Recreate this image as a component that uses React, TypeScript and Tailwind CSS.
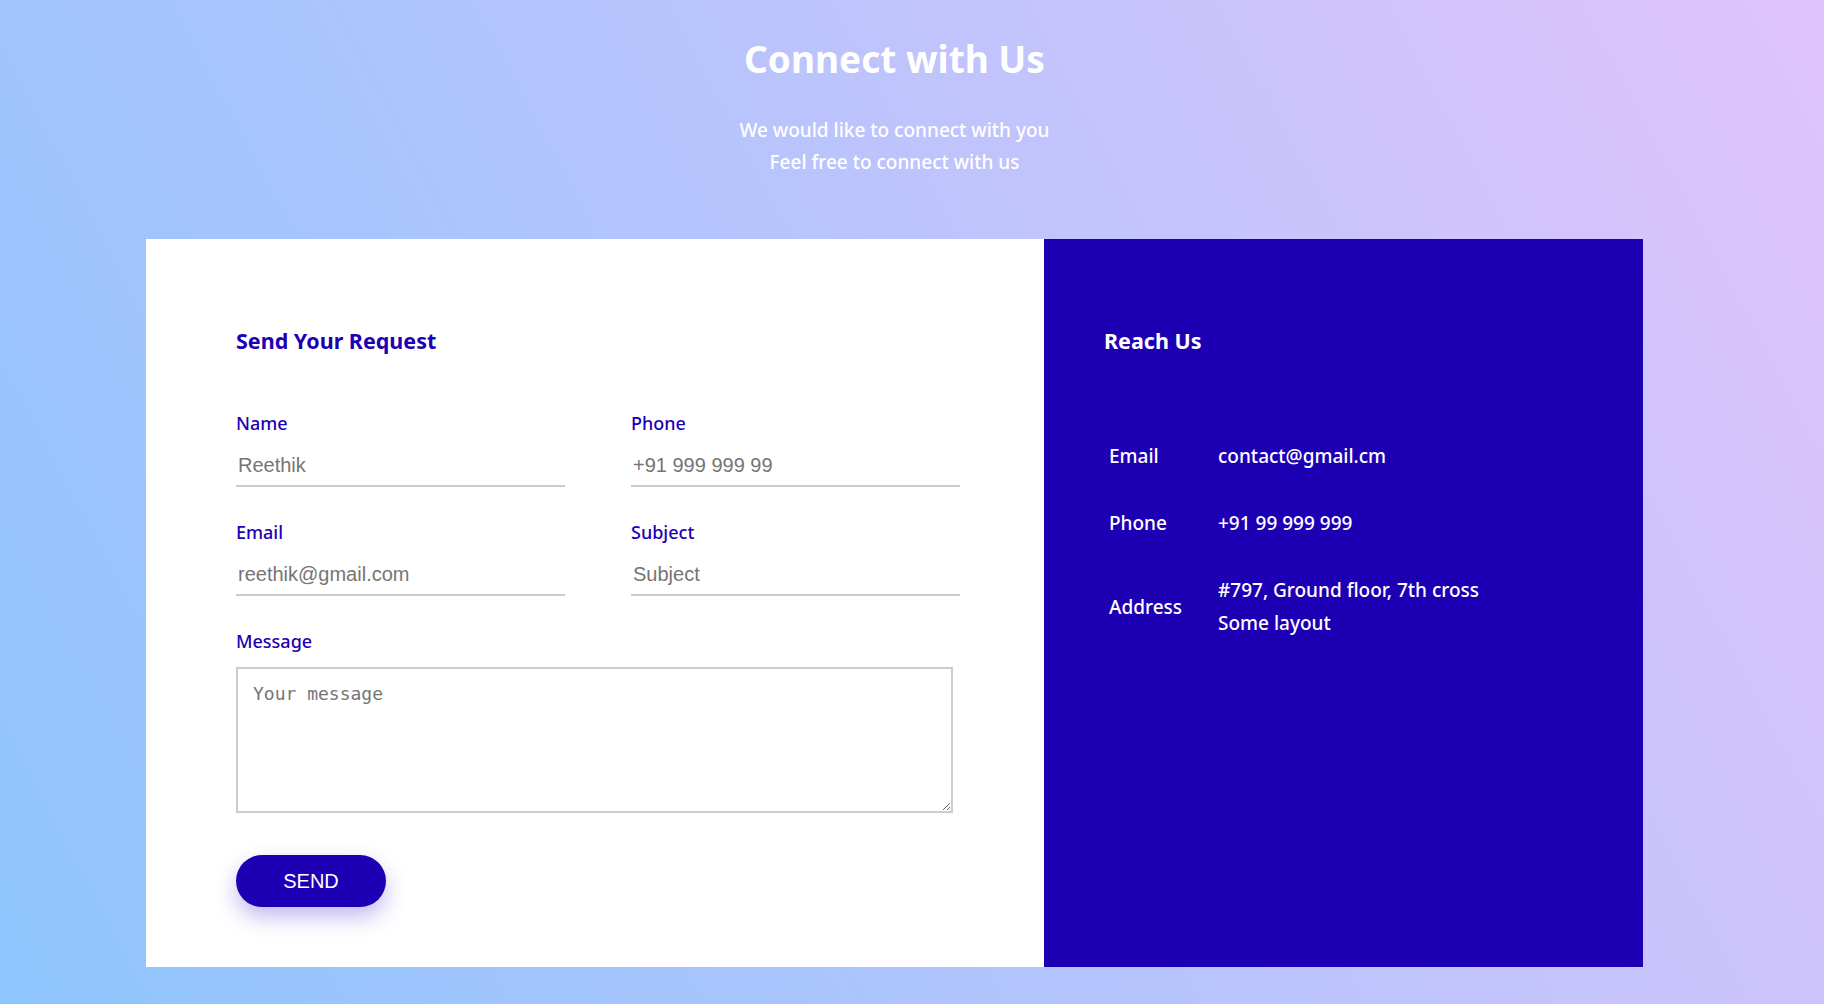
import React from 'react';

const fields = [
  { label: 'Name', placeholder: 'Reethik', type: 'text' },
  { label: 'Phone', placeholder: '+91 999 999 99', type: 'tel' },
  { label: 'Email', placeholder: 'reethik@gmail.com', type: 'email' },
  { label: 'Subject', placeholder: 'Subject', type: 'text' },
];

const contacts = [
  { label: 'Email', lines: ['contact@gmail.cm'] },
  { label: 'Phone', lines: ['+91 99 999 999'] },
  { label: 'Address', lines: ['#797, Ground floor, 7th cross', 'Some layout'] },
];

const Field = ({ label, placeholder, type }) => (
  <div className="flex w-[329px] flex-col">
    <label className="text-[18px] leading-[24px] font-medium text-[#1e00b4]">{label}</label>
    <input
      type={type}
      placeholder={placeholder}
      className="mt-[13px] border-b-2 border-[#cccccc] px-[2px] pt-[6px] pb-[8px] font-['Liberation_Sans',Arial,sans-serif] text-[20px] leading-[23px] text-[#333] outline-none placeholder:text-[#757575]"
    />
  </div>
);

const App = () => {
  return (
    <div className="min-h-screen w-full bg-[linear-gradient(62deg,#8ec5fc_0%,#e0c3fc_100%)] font-['Noto_Sans',sans-serif]">
      <div className="flex w-[1789px] flex-col items-center pt-[39px] pb-[37px]">
        <h1 className="text-[37px] leading-[40px] font-bold text-white">Connect with Us</h1>
        <p className="mt-[35px] text-center text-[19px] leading-[32px] font-medium text-white">
          We would like to connect with you
          <br />
          Feel free to connect with us
        </p>

        <div className="mt-[61px] flex h-[728px] w-[1497px]">
          {/* form */}
          <div className="flex w-[898px] flex-col bg-white pt-[88px] pl-[90px]">
            <h2 className="text-[21.5px] leading-[28px] font-bold text-[#1e00b4]">Send Your Request</h2>
            <div className="mt-[56px] grid w-[724px] grid-cols-[329px_329px] gap-x-[66px] gap-y-[33px]">
              {fields.map((f) => (
                <Field key={f.label} {...f} />
              ))}
            </div>
            <label className="mt-[33px] text-[18px] leading-[24px] font-medium text-[#1e00b4]">Message</label>
            <textarea
              placeholder="Your message"
              className="mt-[14px] h-[146px] w-[717px] border-2 border-[#cccccc] px-[15px] py-[14px] font-['DejaVu_Sans_Mono',monospace] text-[18px] leading-[21px] outline-none placeholder:text-[#757575]"
            />
            <button className="mt-[42px] h-[52px] w-[150px] rounded-full bg-[#1e00b4] font-['Liberation_Sans',Arial,sans-serif] text-[20px] text-white shadow-[0_10px_22px_rgba(40,0,200,0.28)]">
              SEND
            </button>
          </div>

          {/* info */}
          <div className="flex w-[599px] flex-col bg-[#1e00b4] pt-[88px] pl-[60px] text-white">
            <h2 className="text-[21.5px] leading-[28px] font-bold">Reach Us</h2>
            <div className="mt-[68px] ml-[5px] grid grid-cols-[109px_auto] text-[19px] leading-[33px] font-medium">
              {contacts.map((c) => (
                <React.Fragment key={c.label}>
                  <div className="flex items-center py-[17px]">{c.label}</div>
                  <div className="py-[17px]">
                    {c.lines.map((l) => (
                      <div key={l}>{l}</div>
                    ))}
                  </div>
                </React.Fragment>
              ))}
            </div>
          </div>
        </div>
      </div>
    </div>
  );
};

export default App;
